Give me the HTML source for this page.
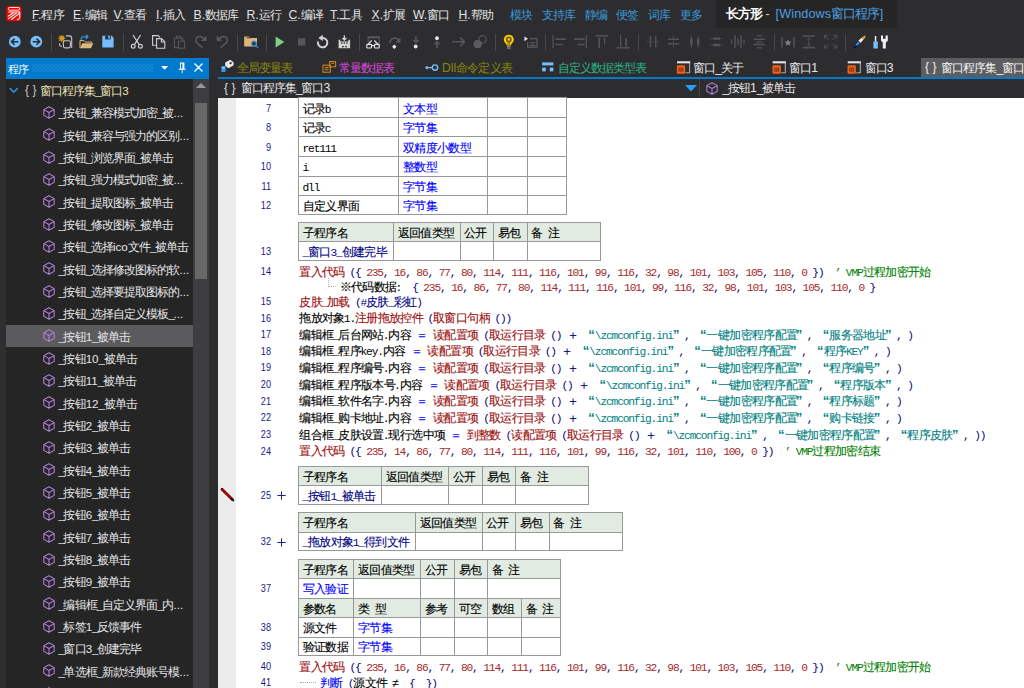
<!DOCTYPE html>
<html><head><meta charset="utf-8"><title>IDE</title>
<style>
html,body{margin:0;padding:0;background:#2d2d30;}
body{width:1024px;height:688px;overflow:hidden;position:relative;font-family:"Liberation Sans",sans-serif;}
#root{position:absolute;left:0;top:0;width:1024px;height:688px;overflow:hidden;background:#2d2d30;}
.abs{position:absolute;}
.t{position:absolute;white-space:nowrap;font-size:12.2px;line-height:16px;height:16px;color:#e4e4e4;}
.u{display:inline-block;white-space:nowrap;font-size:12px;letter-spacing:-0.9px;vertical-align:baseline;overflow:visible;}
.k{display:inline-block;white-space:nowrap;font-size:11.8px;letter-spacing:-0.64px;-webkit-text-stroke:0.12px;overflow:visible;vertical-align:baseline;font-family:"Liberation Sans",sans-serif;}
.us{letter-spacing:-1.4px;}
.qr{text-align:right;font-size:13px;letter-spacing:0;font-weight:bold;-webkit-text-stroke:0;}
.ql{text-align:left;font-size:13px;letter-spacing:0;font-weight:bold;-webkit-text-stroke:0;}
.a{display:inline-block;white-space:nowrap;font-family:"Liberation Mono",monospace;font-size:11.2px;letter-spacing:-1.141px;overflow:visible;vertical-align:baseline;}
.cl{position:absolute;left:299.2px;white-space:nowrap;height:16px;line-height:16px;font-size:11.16px;color:#000;}
.ln{position:absolute;left:240px;width:31px;text-align:right;font-size:10.4px;transform:scaleX(0.88);transform-origin:100% 50%;line-height:14px;height:14px;color:#1a1a8c;font-family:"Liberation Sans",sans-serif;}
.tb{position:absolute;border:1px solid #989898;box-sizing:border-box;background:#fff;}
.hd{position:absolute;background:#e1ebe1;}
.vl{position:absolute;width:1px;background:#989898;}
.hl{position:absolute;height:1px;background:#989898;}
.ct{position:absolute;white-space:nowrap;height:16px;line-height:16px;font-size:11.16px;color:#000;}
.sep{position:absolute;width:1px;background:#47474b;top:33.5px;height:17.5px;}
.tr{position:absolute;left:58.4px;white-space:nowrap;font-size:11.6px;line-height:16px;height:16px;color:#e6e6e6;}
svg{position:absolute;overflow:visible;}
</style></head><body><div id="root">
<div class="abs" style="left:0;top:0;width:1024px;height:57px;background:#2d2d30"></div><svg style="left:0;top:0" width="28" height="28" viewBox="0 0 28 28"><rect x="6.400" y="6" width="15" height="15.300" rx="2.400" fill="#f00505"/>
<rect x="8.300" y="7.500" width="11.300" height="2.700" rx="1.300" fill="none" stroke="#fff" stroke-width="0.900"/>
<path d="M8.300 12h11.400" stroke="#fff" stroke-width="1" fill="none"/>
<path d="M13.400 12.700L8.200 16.200M16.400 13L8.600 18.600M19 13.600L11.400 19.500M19.700 12v5.200q0 1.800-2.400 2.600" stroke="#fff" stroke-width="1.050" fill="none" stroke-linecap="round"/></svg><div class="t" style="left:32.0px;top:6.9px"><span style="text-decoration:underline;text-decoration-color:#9c9c9c;text-decoration-thickness:1px;text-underline-offset:0.6px">F</span>.<span class="u" style="width:22.20px">程序</span></div><div class="t" style="left:73.0px;top:6.9px"><span style="text-decoration:underline;text-decoration-color:#9c9c9c;text-decoration-thickness:1px;text-underline-offset:0.6px">E</span>.<span class="u" style="width:22.20px">编辑</span></div><div class="t" style="left:113.5px;top:6.9px"><span style="text-decoration:underline;text-decoration-color:#9c9c9c;text-decoration-thickness:1px;text-underline-offset:0.6px">V</span>.<span class="u" style="width:22.20px">查看</span></div><div class="t" style="left:156.0px;top:6.9px"><span style="text-decoration:underline;text-decoration-color:#9c9c9c;text-decoration-thickness:1px;text-underline-offset:0.6px">I</span>.<span class="u" style="width:22.20px">插入</span></div><div class="t" style="left:193.5px;top:6.9px"><span style="text-decoration:underline;text-decoration-color:#9c9c9c;text-decoration-thickness:1px;text-underline-offset:0.6px">B</span>.<span class="u" style="width:33.30px">数据库</span></div><div class="t" style="left:246.5px;top:6.9px"><span style="text-decoration:underline;text-decoration-color:#9c9c9c;text-decoration-thickness:1px;text-underline-offset:0.6px">R</span>.<span class="u" style="width:22.20px">运行</span></div><div class="t" style="left:288.5px;top:6.9px"><span style="text-decoration:underline;text-decoration-color:#9c9c9c;text-decoration-thickness:1px;text-underline-offset:0.6px">C</span>.<span class="u" style="width:22.20px">编译</span></div><div class="t" style="left:330.0px;top:6.9px"><span style="text-decoration:underline;text-decoration-color:#9c9c9c;text-decoration-thickness:1px;text-underline-offset:0.6px">T</span>.<span class="u" style="width:22.20px">工具</span></div><div class="t" style="left:371.5px;top:6.9px"><span style="text-decoration:underline;text-decoration-color:#9c9c9c;text-decoration-thickness:1px;text-underline-offset:0.6px">X</span>.<span class="u" style="width:22.20px">扩展</span></div><div class="t" style="left:413.0px;top:6.9px"><span style="text-decoration:underline;text-decoration-color:#9c9c9c;text-decoration-thickness:1px;text-underline-offset:0.6px">W</span>.<span class="u" style="width:22.20px">窗口</span></div><div class="t" style="left:458.5px;top:6.9px"><span style="text-decoration:underline;text-decoration-color:#9c9c9c;text-decoration-thickness:1px;text-underline-offset:0.6px">H</span>.<span class="u" style="width:22.20px">帮助</span></div><div class="t" style="left:510.0px;top:6.9px;color:#3c97d6"><span class="u" style="width:22.20px">模块</span></div><div class="t" style="left:542.0px;top:6.9px;color:#3c97d6"><span class="u" style="width:33.30px">支持库</span></div><div class="t" style="left:585.0px;top:6.9px;color:#3c97d6"><span class="u" style="width:22.20px">静编</span></div><div class="t" style="left:616.0px;top:6.9px;color:#3c97d6"><span class="u" style="width:22.20px">便签</span></div><div class="t" style="left:648.0px;top:6.9px;color:#3c97d6"><span class="u" style="width:22.20px">词库</span></div><div class="t" style="left:679.5px;top:6.9px;color:#3c97d6"><span class="u" style="width:22.20px">更多</span></div><div class="abs" style="left:716px;top:0;width:181px;height:27.5px;background:#252526"></div><div class="t" style="left:726px;top:6px;color:#ffffff;font-size:12px"><b><span class="u" style="width:35.10px;font-size:12.64px;letter-spacing:-0.94px">长方形</span></b></div><div class="t" style="left:765.5px;top:6px;color:#d8d8d8;font-size:12px">-</div><div class="t" style="left:775.5px;top:6px;color:#4f9fe0;font-size:12.6px;letter-spacing:0.15px">[Windows<span class="u" style="width:48.40px;font-size:13.07px;letter-spacing:-0.97px">窗口程序</span>]</div><svg style="left:0;top:28px" width="1024" height="29" viewBox="0 28 1024 29">
<g fill="none" stroke="#47474b" stroke-width="1">
<path d="M51.5 33.5v17.5M123.5 33.5v17.5M237.5 33.5v17.5M266.5 33.5v17.5M359.5 33.5v17.5M495.5 33.5v17.5M545.5 33.5v17.5M638.5 33.5v17.5M774.5 33.5v17.5M845.5 33.5v17.5"/>
</g>
<!-- back / forward -->
<circle cx="14.8" cy="41.7" r="5.9" fill="#75beff"/>
<path d="M18.4 41.7H11.6M14.6 38.6L11.4 41.7L14.6 44.8" stroke="#2d2d30" stroke-width="1.5" fill="none"/>
<circle cx="36.3" cy="41.7" r="5.9" fill="#75beff"/>
<path d="M32.7 41.7H39.5M36.5 38.6L39.7 41.7L36.5 44.8" stroke="#2d2d30" stroke-width="1.5" fill="none"/>
<!-- new -->
<g stroke="#d08e18" stroke-width="1.100" fill="none"><path d="M61.800 34.900v7M58.300 38.400h7M59.300 35.900l5 5M64.300 35.900l-5 5"/></g>
<circle cx="61.800" cy="38.400" r="2.300" fill="#d8961c"/>
<path d="M66 35.900h3.200q2.500 0 2.500 2.500v9.500" stroke="#c4c4c4" stroke-width="1.100" fill="none"/>
<rect x="63.400" y="40.700" width="7" height="7.200" rx="1.600" stroke="#c4c4c4" stroke-width="1.100" fill="none"/>
<path d="M59.600 43.200v1.600q0 1.500 1.500 1.500h1" stroke="#c4c4c4" stroke-width="1.100" fill="none"/>
<!-- open -->
<path d="M80 48.2v-7.6h4l1.2 1.4h6.3v1.3" stroke="#dcb67a" stroke-width="1" fill="none"/>
<path d="M82.3 43.2h11l-2.3 5h-11z" fill="#dcb67a"/>
<path d="M81.2 40v-1.2q0-2 2-2h4.4M85.8 34.6l2.2 2.2l-2.2 2.2" stroke="#3794e0" stroke-width="1.2" fill="none"/>
<!-- save -->
<path d="M102.3 35.8h9.3l2 2v9.7h-11.3z" fill="#75beff"/>
<rect x="105.2" y="35.8" width="5.6" height="3.6" fill="#2d2d30"/>
<rect x="108.2" y="35.8" width="1.6" height="2.8" fill="#75beff"/>
<!-- cut -->
<g stroke="#d0d0d0" stroke-width="1.2" fill="none">
<path d="M133 35l6.2 9.6M140.6 35l-6.2 9.6"/>
<circle cx="133.2" cy="46.2" r="1.9"/><circle cx="140.4" cy="46.2" r="1.9"/>
</g>
<!-- copy -->
<g stroke="#d0d0d0" stroke-width="1.1" fill="none">
<path d="M155.8 45.3h-3.2v-9.7h5.6l1.8 1.8"/>
<path d="M156.6 38.6h5l3.2 3.2v6.4h-8.2z"/><path d="M161.4 38.8v3.2h3.2"/>
</g>
<!-- paste dim -->
<g stroke="#57575a" stroke-width="1.1" fill="none">
<path d="M178 47.6h-3.6v-9.4h8.4v2.6"/><path d="M176.6 38v-1.8h4v1.8"/>
<rect x="178.4" y="41.2" width="6.2" height="7"/>
</g>
<!-- redo dim -->
<g stroke="#5a5a5d" stroke-width="1.500" fill="none" stroke-linecap="round">
<path d="M204.600 39.800Q202.600 36.300 199.400 36.400Q195.700 37 195.900 40.600Q196 42 197.400 43.300L202.200 47.400"/>
<path d="M218.600 39.800Q220.600 36.300 223.800 36.400Q227.500 37 227.300 40.600Q227.200 42 225.800 43.300L221 47.400"/>
</g>
<path d="M206.500 35.400v5.600h-5.600z" fill="#5a5a5d"/>
<path d="M216.700 35.400v5.600h5.600z" fill="#5a5a5d"/>
<!-- folder search -->
<path d="M244.200 36.500h4.600l1.200 1.400h7v8.600h-12.800z" fill="#dcb67a"/>
<path d="M246.400 37.800h4.400" stroke="#3a3222" stroke-width="0.900"/>
<circle cx="254" cy="43.600" r="2.200" fill="#26303c" stroke="#3580c8" stroke-width="1.300"/>
<path d="M255.700 45.300l2.400 2.400" stroke="#3580c8" stroke-width="1.500"/>
<!-- play -->
<path d="M275.600 36.600L284.300 42L275.600 47.500z" fill="#7fcf8a"/>
<!-- stop dim -->
<rect x="298" y="38.200" width="7.300" height="7.300" fill="#57575a"/>
<!-- restart -->
<path d="M322.650 37.950a4.700 4.700 0 1 1 -4.550 3.500" stroke="#d4d4d4" stroke-width="1.900" fill="none"/>
<path d="M318.300 37.900l4.600-3.100v6.200z" fill="#d4d4d4"/>
<!-- install -->
<path d="M338.600 39.800h1.700v1.800h8.100v-1.800h1.700v8.500h-11.500z" fill="#d4d4d4"/>
<path d="M344.350 35.400v3.400" stroke="#d4d4d4" stroke-width="1.500" fill="none"/>
<path d="M341.600 38.100h5.500l-2.750 3z" fill="#d4d4d4"/>
<g fill="#2d2d30"><rect x="341" y="42.500" width="1.500" height="1.200"/><rect x="343.600" y="42.500" width="1.500" height="1.200"/><rect x="346.200" y="42.500" width="1.500" height="1.200"/><rect x="342" y="46" width="1.700" height="1.300"/><rect x="345.200" y="46" width="1.700" height="1.300"/></g>
<!-- glasses -->
<path d="M368.200 42v-4.600h11v9.400" stroke="#5a5a5d" stroke-width="1.100" fill="none"/>
<path d="M367.600 37.300h12.200" stroke="#5a5a5d" stroke-width="1.900"/>
<g stroke="#e4e4e4" stroke-width="1.150" fill="none"><path d="M368 44.300l3.600-3.800M378 44.300l-3.600-3.800"/><rect x="366.800" y="44.400" width="4.700" height="3.600" rx="0.800"/><rect x="374.500" y="44.400" width="4.700" height="3.600" rx="0.800"/><path d="M371.500 45.600h3"/></g>
<!-- step over -->
<path d="M389.800 43.200q.8-5 5-5.200q2.600 0 4 2.200" stroke="#5a5a5d" stroke-width="1.600" fill="none"/>
<path d="M400.400 37.400v5.200h-5.200z" fill="#5a5a5d"/>
<path d="M394.300 44.500l2.200 2.200l-2.200 2.200l-2.200-2.200z" fill="#ececec"/>
<!-- step into -->
<path d="M415.900 36v6.400M413.300 39.800l2.600 2.800l2.600-2.800" stroke="#57575a" stroke-width="1.500" fill="none"/>
<circle cx="415.700" cy="46.500" r="1.900" fill="#e8e8e8"/>
<!-- step out -->
<circle cx="437" cy="38.200" r="1.900" fill="#e8e8e8"/>
<path d="M437 48.200v-6.400M434.400 44.400l2.600-2.800l2.600 2.800" stroke="#57575a" stroke-width="1.500" fill="none"/>
<!-- arrow right dim -->
<path d="M452.300 41.800h12M460 37.400l4.500 4.400l-4.500 4.400" stroke="#57575a" stroke-width="1.500" fill="none"/>
<!-- breakpoints dim -->
<circle cx="482.600" cy="39.400" r="3.700" fill="none" stroke="#57575a" stroke-width="1.200"/>
<circle cx="477.700" cy="44.200" r="4.100" fill="#5c5c5f"/>
<!-- bulb -->
<path d="M508.800 34.700a4.900 4.900 0 0 1 3 8.800q-.9.800-.9 2h-4.200q0-1.200-.9-2a4.900 4.900 0 0 1 3-8.800z" fill="#ffcc00"/>
<circle cx="508.800" cy="39.500" r="2.900" fill="#6e5a00"/>
<rect x="507.700" y="38.400" width="2.200" height="2.200" fill="#ffd633"/>
<path d="M508 42v3.400M509.600 42v3.400" stroke="#6e5a00" stroke-width="0.700"/>
<path d="M507 46.700h3.600M507 48.100h3.600" stroke="#a8a8a8" stroke-width="0.900"/>
<!-- run-to -->
<path d="M524.400 36.400l3.600 2.400l-3.600 2.400z" fill="#e0e0e0"/>
<path d="M530 38.600h7v8.600h-9.400v-4.600" stroke="#5c5c60" stroke-width="1.200" fill="none"/>
<path d="M529.600 42.600h6M532.400 42.600v3M529.600 45.400h6" stroke="#5c5c60" stroke-width="0.900" fill="none"/>
<!-- align icons dim -->
<g stroke="#535357" fill="none">
<path d="M553 35v13.300" stroke-width="1.300"/><path d="M555.400 39.200h10.400M555.400 44.500h7.600" stroke-width="1.700"/>
<path d="M586.300 35v13.300" stroke-width="1.300"/><path d="M574 39.200h10.600M577.400 44.500h7.200" stroke-width="1.700"/>
<path d="M595.500 35.800h12.800" stroke-width="1.500"/><path d="M599.200 37.600v10.600" stroke-width="1.800"/><path d="M604.600 37.600v6.800" stroke-width="1.300"/>
<path d="M616.600 47.800h13.200" stroke-width="1.500"/><path d="M620.600 35.200v11.400" stroke-width="1.300"/><path d="M626.100 38v8.600" stroke-width="1.700"/>
<!-- spacing -->
<path d="M650.400 36.200v11M655.700 36.200v11" stroke-width="1.600"/><path d="M647 41.800h2M657 41.800h2M652 41.800h2" stroke-width="1"/>
<path d="M667.800 39.200h11.200M667.800 43.800h11.200" stroke-width="1.600"/><path d="M673.400 35.600v2.400M673.400 40.600v2M673.400 45.200v2.400" stroke-width="1"/>
<path d="M691.400 38.200v7.200M698.200 38.200v7.200" stroke-width="2.600"/><path d="M691.400 35v13.400M698.200 35v13.400" stroke-width="0.700"/>
<path d="M713.400 38.600h6.600M713.400 45h6.600" stroke-width="2.400"/><path d="M709.800 38.600h13.200M709.800 45h13.200" stroke-width="0.700"/>
<path d="M735 35.200v13M741 35.200v13" stroke-width="1.500"/><path d="M738 38.400v6.800" stroke-width="1.500"/><path d="M731.600 39.400v4.800M744 39.400v4.800" stroke-width="1.300"/>
<path d="M753.600 39.200h11.400M753.600 44.600h11.400" stroke-width="1.500"/><path d="M756.600 35.800h5.400M756.600 47.800h5.400M756.600 41.900h5.400" stroke-width="1.300"/>
<!-- |*| -->
<path d="M782 37v10.400M794 37v10.400" stroke-width="1.500"/>
<!-- I height -->
<path d="M802.600 36h12.400M802.600 47.600h12.400" stroke-width="1.700"/><path d="M808.800 38v7.600M807.200 39.600l1.600-1.600l1.600 1.600M807.200 44l1.600 1.600l1.600-1.600" stroke-width="0.900"/>
<!-- expand -->
<path d="M824.400 38.800v-3.400h3.400M824.600 35.600l4 4M833.400 35.400h3.400v3.400M836.600 35.600l-4 4M824.400 44.600v3.400h3.400M824.600 47.800l4-4M833.400 48h3.400v-3.400M836.600 47.800l-4-4" stroke-width="1"/>
</g>
<path d="M788 39.300l1 2.200l2.400.3l-1.800 1.600l.5 2.400l-2.100-1.200l-2.100 1.200l.5-2.400l-1.800-1.600l2.400-.3z" fill="#808083"/>
<!-- brush -->
<path d="M853.400 49q.6-4.400 4-7.600l2.800 2.200q-3 3.600-6.800 5.400z" fill="#101014"/>
<path d="M855 46.200q1-2.800 3-4.800l2 1.800q-2 2.400-5 3z" fill="#1e90ff"/>
<path d="M858.400 40.800l3.200-3l2 1.800l-3 3.200z" fill="#f4f4f4"/>
<path d="M861.800 37.600q1.800-1.800 3.600-2.200q.8.800-1.600 4z" fill="#f0a030"/>
<!-- tools -->
<rect x="874.800" y="36" width="1.500" height="5.400" fill="#f0f0f0"/>
<rect x="873.400" y="41.200" width="4.400" height="7.400" rx="0.600" fill="#75beff"/>
<path d="M881 35.600h2v3.200h2.600v-3.200h2.200v5.200l-2 1.800v6h-3v-6l-1.800-1.800z" fill="#f0f0f0"/>
</svg>
<div class="abs" style="left:0;top:57.5px;width:5.5px;height:631px;background:#2f2f32"></div><div class="abs" style="left:5.5px;top:57.5px;width:203.7px;height:21.3px;background:#007acc"></div><div class="t" style="left:7.8px;top:60.8px;color:#fff;font-size:11.4px"><span class="u" style="width:21.20px;font-size:11.45px;letter-spacing:-0.85px">程序</span></div><div class="abs" style="left:32px;top:64px;width:121px;height:8px;opacity:.2;background-image:radial-gradient(circle,#d8ecff 0.6px,transparent 0.9px),radial-gradient(circle,#d8ecff 0.6px,transparent 0.9px);background-size:4px 4px;background-position:0 0,2px 2px"></div><svg style="left:160px;top:60px" width="48" height="16" viewBox="160 60 48 16">
<path d="M161 66h7.2l-3.6 3.8z" fill="#fff"/>
<path d="M180 62.5h4.4v6.3h1.2v1h-3v3.4h-0.9v-3.4h-3v-1h1.3z M181 63.5v5.3h1.4v-5.3z" fill="#fff" fill-rule="evenodd"/>
<path d="M194.5 63.5l8 8M202.5 63.5l-8 8" stroke="#fff" stroke-width="1.3" fill="none"/></svg><div class="abs" style="left:5.5px;top:78.8px;width:187px;height:610px;background:#252526"></div><div class="abs" style="left:192.8px;top:78.8px;width:17.2px;height:610px;background:#3e3e42"></div><div class="abs" style="left:195px;top:102.7px;width:12.3px;height:176.6px;background:#686868"></div><svg style="left:196px;top:82.5px" width="10" height="5" viewBox="0 0 10 5"><path d="M0 5L5 0L10 5z" fill="#999"/></svg><div class="abs" style="left:209.2px;top:57.5px;width:8.8px;height:631px;background:#2d2d30"></div><svg style="left:9px;top:87.0px" width="10" height="7" viewBox="0 0 10 7"><path d="M0.8 1L4.8 5.2L8.8 1" fill="none" stroke="#2b9af0" stroke-width="1.4"/></svg><div class="tr" style="left:25px;top:81.8px;color:#c6c6c6;font-size:12px;letter-spacing:0.1px">{&nbsp;}</div><div class="tr" style="left:39.6px;top:82.7px;color:#e8e2b8"><span class="u" style="width:55.50px">窗口程序集</span><span class="us">_</span><span class="u" style="width:22.20px">窗口</span>3</div><svg style="left:42.5px;top:106.0px" width="12" height="13" viewBox="0 0 12 13"><path d="M6 0.7L11.2 3.6V9.4L6 12.3L0.8 9.4V3.6z M0.8 3.6L6 6.5L11.2 3.6 M6 6.5V12.3" fill="none" stroke="#b180d7" stroke-width="1.05" stroke-linejoin="round"/></svg><div class="tr" style="top:105.4px"><span class="us">_</span><span class="u" style="width:22.20px">按钮</span><span class="us">_</span><span class="u" style="width:66.60px">兼容模式加密</span><span class="us">_</span><span class="u" style="width:11.10px">被</span>...</div><svg style="left:42.5px;top:128.4px" width="12" height="13" viewBox="0 0 12 13"><path d="M6 0.7L11.2 3.6V9.4L6 12.3L0.8 9.4V3.6z M0.8 3.6L6 6.5L11.2 3.6 M6 6.5V12.3" fill="none" stroke="#b180d7" stroke-width="1.05" stroke-linejoin="round"/></svg><div class="tr" style="top:127.8px"><span class="us">_</span><span class="u" style="width:22.20px">按钮</span><span class="us">_</span><span class="u" style="width:88.80px">兼容与强力的区别</span>...</div><svg style="left:42.5px;top:150.7px" width="12" height="13" viewBox="0 0 12 13"><path d="M6 0.7L11.2 3.6V9.4L6 12.3L0.8 9.4V3.6z M0.8 3.6L6 6.5L11.2 3.6 M6 6.5V12.3" fill="none" stroke="#b180d7" stroke-width="1.05" stroke-linejoin="round"/></svg><div class="tr" style="top:150.1px"><span class="us">_</span><span class="u" style="width:22.20px">按钮</span><span class="us">_</span><span class="u" style="width:44.40px">浏览界面</span><span class="us">_</span><span class="u" style="width:33.30px">被单击</span></div><svg style="left:42.5px;top:173.0px" width="12" height="13" viewBox="0 0 12 13"><path d="M6 0.7L11.2 3.6V9.4L6 12.3L0.8 9.4V3.6z M0.8 3.6L6 6.5L11.2 3.6 M6 6.5V12.3" fill="none" stroke="#b180d7" stroke-width="1.05" stroke-linejoin="round"/></svg><div class="tr" style="top:172.4px"><span class="us">_</span><span class="u" style="width:22.20px">按钮</span><span class="us">_</span><span class="u" style="width:66.60px">强力模式加密</span><span class="us">_</span><span class="u" style="width:11.10px">被</span>...</div><svg style="left:42.5px;top:195.3px" width="12" height="13" viewBox="0 0 12 13"><path d="M6 0.7L11.2 3.6V9.4L6 12.3L0.8 9.4V3.6z M0.8 3.6L6 6.5L11.2 3.6 M6 6.5V12.3" fill="none" stroke="#b180d7" stroke-width="1.05" stroke-linejoin="round"/></svg><div class="tr" style="top:194.7px"><span class="us">_</span><span class="u" style="width:22.20px">按钮</span><span class="us">_</span><span class="u" style="width:44.40px">提取图标</span><span class="us">_</span><span class="u" style="width:33.30px">被单击</span></div><svg style="left:42.5px;top:217.7px" width="12" height="13" viewBox="0 0 12 13"><path d="M6 0.7L11.2 3.6V9.4L6 12.3L0.8 9.4V3.6z M0.8 3.6L6 6.5L11.2 3.6 M6 6.5V12.3" fill="none" stroke="#b180d7" stroke-width="1.05" stroke-linejoin="round"/></svg><div class="tr" style="top:217.1px"><span class="us">_</span><span class="u" style="width:22.20px">按钮</span><span class="us">_</span><span class="u" style="width:44.40px">修改图标</span><span class="us">_</span><span class="u" style="width:33.30px">被单击</span></div><svg style="left:42.5px;top:240.0px" width="12" height="13" viewBox="0 0 12 13"><path d="M6 0.7L11.2 3.6V9.4L6 12.3L0.8 9.4V3.6z M0.8 3.6L6 6.5L11.2 3.6 M6 6.5V12.3" fill="none" stroke="#b180d7" stroke-width="1.05" stroke-linejoin="round"/></svg><div class="tr" style="top:239.4px"><span class="us">_</span><span class="u" style="width:22.20px">按钮</span><span class="us">_</span><span class="u" style="width:22.20px">选择</span>ico<span class="u" style="width:22.20px">文件</span><span class="us">_</span><span class="u" style="width:33.30px">被单击</span></div><svg style="left:42.5px;top:262.3px" width="12" height="13" viewBox="0 0 12 13"><path d="M6 0.7L11.2 3.6V9.4L6 12.3L0.8 9.4V3.6z M0.8 3.6L6 6.5L11.2 3.6 M6 6.5V12.3" fill="none" stroke="#b180d7" stroke-width="1.05" stroke-linejoin="round"/></svg><div class="tr" style="top:261.7px"><span class="us">_</span><span class="u" style="width:22.20px">按钮</span><span class="us">_</span><span class="u" style="width:88.80px">选择修改图标的软</span>...</div><svg style="left:42.5px;top:284.7px" width="12" height="13" viewBox="0 0 12 13"><path d="M6 0.7L11.2 3.6V9.4L6 12.3L0.8 9.4V3.6z M0.8 3.6L6 6.5L11.2 3.6 M6 6.5V12.3" fill="none" stroke="#b180d7" stroke-width="1.05" stroke-linejoin="round"/></svg><div class="tr" style="top:284.1px"><span class="us">_</span><span class="u" style="width:22.20px">按钮</span><span class="us">_</span><span class="u" style="width:88.80px">选择要提取图标的</span>...</div><svg style="left:42.5px;top:307.0px" width="12" height="13" viewBox="0 0 12 13"><path d="M6 0.7L11.2 3.6V9.4L6 12.3L0.8 9.4V3.6z M0.8 3.6L6 6.5L11.2 3.6 M6 6.5V12.3" fill="none" stroke="#b180d7" stroke-width="1.05" stroke-linejoin="round"/></svg><div class="tr" style="top:306.4px"><span class="us">_</span><span class="u" style="width:22.20px">按钮</span><span class="us">_</span><span class="u" style="width:77.70px">选择自定义模板</span><span class="us">_</span>...</div><div class="abs" style="left:5.5px;top:324.7px;width:187.3px;height:22.2px;background:#5b5b5e"></div><svg style="left:42.5px;top:329.3px" width="12" height="13" viewBox="0 0 12 13"><path d="M6 0.7L11.2 3.6V9.4L6 12.3L0.8 9.4V3.6z M0.8 3.6L6 6.5L11.2 3.6 M6 6.5V12.3" fill="none" stroke="#b180d7" stroke-width="1.05" stroke-linejoin="round"/></svg><div class="tr" style="top:328.7px"><span class="us">_</span><span class="u" style="width:22.20px">按钮</span>1<span class="us">_</span><span class="u" style="width:33.30px">被单击</span></div><svg style="left:42.5px;top:351.7px" width="12" height="13" viewBox="0 0 12 13"><path d="M6 0.7L11.2 3.6V9.4L6 12.3L0.8 9.4V3.6z M0.8 3.6L6 6.5L11.2 3.6 M6 6.5V12.3" fill="none" stroke="#b180d7" stroke-width="1.05" stroke-linejoin="round"/></svg><div class="tr" style="top:351.1px"><span class="us">_</span><span class="u" style="width:22.20px">按钮</span>10<span class="us">_</span><span class="u" style="width:33.30px">被单击</span></div><svg style="left:42.5px;top:374.0px" width="12" height="13" viewBox="0 0 12 13"><path d="M6 0.7L11.2 3.6V9.4L6 12.3L0.8 9.4V3.6z M0.8 3.6L6 6.5L11.2 3.6 M6 6.5V12.3" fill="none" stroke="#b180d7" stroke-width="1.05" stroke-linejoin="round"/></svg><div class="tr" style="top:373.4px"><span class="us">_</span><span class="u" style="width:22.20px">按钮</span>11<span class="us">_</span><span class="u" style="width:33.30px">被单击</span></div><svg style="left:42.5px;top:396.3px" width="12" height="13" viewBox="0 0 12 13"><path d="M6 0.7L11.2 3.6V9.4L6 12.3L0.8 9.4V3.6z M0.8 3.6L6 6.5L11.2 3.6 M6 6.5V12.3" fill="none" stroke="#b180d7" stroke-width="1.05" stroke-linejoin="round"/></svg><div class="tr" style="top:395.7px"><span class="us">_</span><span class="u" style="width:22.20px">按钮</span>12<span class="us">_</span><span class="u" style="width:33.30px">被单击</span></div><svg style="left:42.5px;top:418.6px" width="12" height="13" viewBox="0 0 12 13"><path d="M6 0.7L11.2 3.6V9.4L6 12.3L0.8 9.4V3.6z M0.8 3.6L6 6.5L11.2 3.6 M6 6.5V12.3" fill="none" stroke="#b180d7" stroke-width="1.05" stroke-linejoin="round"/></svg><div class="tr" style="top:418.1px"><span class="us">_</span><span class="u" style="width:22.20px">按钮</span>2<span class="us">_</span><span class="u" style="width:33.30px">被单击</span></div><svg style="left:42.5px;top:441.0px" width="12" height="13" viewBox="0 0 12 13"><path d="M6 0.7L11.2 3.6V9.4L6 12.3L0.8 9.4V3.6z M0.8 3.6L6 6.5L11.2 3.6 M6 6.5V12.3" fill="none" stroke="#b180d7" stroke-width="1.05" stroke-linejoin="round"/></svg><div class="tr" style="top:440.4px"><span class="us">_</span><span class="u" style="width:22.20px">按钮</span>3<span class="us">_</span><span class="u" style="width:33.30px">被单击</span></div><svg style="left:42.5px;top:463.3px" width="12" height="13" viewBox="0 0 12 13"><path d="M6 0.7L11.2 3.6V9.4L6 12.3L0.8 9.4V3.6z M0.8 3.6L6 6.5L11.2 3.6 M6 6.5V12.3" fill="none" stroke="#b180d7" stroke-width="1.05" stroke-linejoin="round"/></svg><div class="tr" style="top:462.7px"><span class="us">_</span><span class="u" style="width:22.20px">按钮</span>4<span class="us">_</span><span class="u" style="width:33.30px">被单击</span></div><svg style="left:42.5px;top:485.6px" width="12" height="13" viewBox="0 0 12 13"><path d="M6 0.7L11.2 3.6V9.4L6 12.3L0.8 9.4V3.6z M0.8 3.6L6 6.5L11.2 3.6 M6 6.5V12.3" fill="none" stroke="#b180d7" stroke-width="1.05" stroke-linejoin="round"/></svg><div class="tr" style="top:485.0px"><span class="us">_</span><span class="u" style="width:22.20px">按钮</span>5<span class="us">_</span><span class="u" style="width:33.30px">被单击</span></div><svg style="left:42.5px;top:508.0px" width="12" height="13" viewBox="0 0 12 13"><path d="M6 0.7L11.2 3.6V9.4L6 12.3L0.8 9.4V3.6z M0.8 3.6L6 6.5L11.2 3.6 M6 6.5V12.3" fill="none" stroke="#b180d7" stroke-width="1.05" stroke-linejoin="round"/></svg><div class="tr" style="top:507.4px"><span class="us">_</span><span class="u" style="width:22.20px">按钮</span>6<span class="us">_</span><span class="u" style="width:33.30px">被单击</span></div><svg style="left:42.5px;top:530.3px" width="12" height="13" viewBox="0 0 12 13"><path d="M6 0.7L11.2 3.6V9.4L6 12.3L0.8 9.4V3.6z M0.8 3.6L6 6.5L11.2 3.6 M6 6.5V12.3" fill="none" stroke="#b180d7" stroke-width="1.05" stroke-linejoin="round"/></svg><div class="tr" style="top:529.7px"><span class="us">_</span><span class="u" style="width:22.20px">按钮</span>7<span class="us">_</span><span class="u" style="width:33.30px">被单击</span></div><svg style="left:42.5px;top:552.6px" width="12" height="13" viewBox="0 0 12 13"><path d="M6 0.7L11.2 3.6V9.4L6 12.3L0.8 9.4V3.6z M0.8 3.6L6 6.5L11.2 3.6 M6 6.5V12.3" fill="none" stroke="#b180d7" stroke-width="1.05" stroke-linejoin="round"/></svg><div class="tr" style="top:552.0px"><span class="us">_</span><span class="u" style="width:22.20px">按钮</span>8<span class="us">_</span><span class="u" style="width:33.30px">被单击</span></div><svg style="left:42.5px;top:575.0px" width="12" height="13" viewBox="0 0 12 13"><path d="M6 0.7L11.2 3.6V9.4L6 12.3L0.8 9.4V3.6z M0.8 3.6L6 6.5L11.2 3.6 M6 6.5V12.3" fill="none" stroke="#b180d7" stroke-width="1.05" stroke-linejoin="round"/></svg><div class="tr" style="top:574.4px"><span class="us">_</span><span class="u" style="width:22.20px">按钮</span>9<span class="us">_</span><span class="u" style="width:33.30px">被单击</span></div><svg style="left:42.5px;top:597.3px" width="12" height="13" viewBox="0 0 12 13"><path d="M6 0.7L11.2 3.6V9.4L6 12.3L0.8 9.4V3.6z M0.8 3.6L6 6.5L11.2 3.6 M6 6.5V12.3" fill="none" stroke="#b180d7" stroke-width="1.05" stroke-linejoin="round"/></svg><div class="tr" style="top:596.7px"><span class="us">_</span><span class="u" style="width:33.30px">编辑框</span><span class="us">_</span><span class="u" style="width:55.50px">自定义界面</span><span class="us">_</span><span class="u" style="width:11.10px">内</span>...</div><svg style="left:42.5px;top:619.6px" width="12" height="13" viewBox="0 0 12 13"><path d="M6 0.7L11.2 3.6V9.4L6 12.3L0.8 9.4V3.6z M0.8 3.6L6 6.5L11.2 3.6 M6 6.5V12.3" fill="none" stroke="#b180d7" stroke-width="1.05" stroke-linejoin="round"/></svg><div class="tr" style="top:619.0px"><span class="us">_</span><span class="u" style="width:22.20px">标签</span>1<span class="us">_</span><span class="u" style="width:44.40px">反馈事件</span></div><svg style="left:42.5px;top:642.0px" width="12" height="13" viewBox="0 0 12 13"><path d="M6 0.7L11.2 3.6V9.4L6 12.3L0.8 9.4V3.6z M0.8 3.6L6 6.5L11.2 3.6 M6 6.5V12.3" fill="none" stroke="#b180d7" stroke-width="1.05" stroke-linejoin="round"/></svg><div class="tr" style="top:641.4px"><span class="us">_</span><span class="u" style="width:22.20px">窗口</span>3<span class="us">_</span><span class="u" style="width:44.40px">创建完毕</span></div><svg style="left:42.5px;top:664.3px" width="12" height="13" viewBox="0 0 12 13"><path d="M6 0.7L11.2 3.6V9.4L6 12.3L0.8 9.4V3.6z M0.8 3.6L6 6.5L11.2 3.6 M6 6.5V12.3" fill="none" stroke="#b180d7" stroke-width="1.05" stroke-linejoin="round"/></svg><div class="tr" style="top:663.7px"><span class="us">_</span><span class="u" style="width:33.30px">单选框</span><span class="us">_</span><span class="u" style="width:77.70px">新款经典账号模</span>...</div><svg style="left:42.5px;top:686.6px" width="12" height="13" viewBox="0 0 12 13"><path d="M6 0.7L11.2 3.6V9.4L6 12.3L0.8 9.4V3.6z M0.8 3.6L6 6.5L11.2 3.6 M6 6.5V12.3" fill="none" stroke="#b180d7" stroke-width="1.05" stroke-linejoin="round"/></svg><div class="tr" style="top:686.0px"><span class="us">_</span><span class="u" style="width:33.30px">单选框</span><span class="us">_</span><span class="u" style="width:77.70px">新款经典账号模</span>...</div><div class="abs" style="left:920.5px;top:57.5px;width:104px;height:19.5px;background:#5d5d60"></div><div class="t" style="left:237.0px;top:59.5px;color:#87870d"><span class="u" style="width:55.50px">全局变量表</span></div><div class="t" style="left:339.0px;top:59.5px;color:#d548d5"><span class="u" style="width:55.50px">常量数据表</span></div><div class="t" style="left:442.0px;top:59.5px;color:#87870d">Dll<span class="u" style="width:55.50px">命令定义表</span></div><div class="t" style="left:557.6px;top:59.5px;color:#2bb385"><span class="u" style="width:88.80px">自定义数据类型表</span></div><div class="t" style="left:693.0px;top:59.5px;color:#e8e8e8"><span class="u" style="width:22.20px">窗口</span><span class="us">_</span><span class="u" style="width:22.20px">关于</span></div><div class="t" style="left:789.0px;top:59.5px;color:#e8e8e8"><span class="u" style="width:22.20px">窗口</span>1</div><div class="t" style="left:864.5px;top:59.5px;color:#e8e8e8"><span class="u" style="width:22.20px">窗口</span>3</div><div class="t" style="left:925px;top:59px;color:#f0f0f0;font-size:12px;letter-spacing:0.1px">{&nbsp;}</div><div class="t" style="left:941.0px;top:59.5px;color:#f4f4f4"><span class="u" style="width:55.50px">窗口程序集</span><span class="us">_</span><span class="u" style="width:22.20px">窗口</span></div><svg style="left:218px;top:57px" width="806" height="22" viewBox="218 57 806 22">
<!-- global var icon -->
<path d="M225.200 62.600l5-2.800l3.400 2.400v3l-5 3l-3.400-2.400z" fill="#e8e8e8"/>
<circle cx="230.600" cy="63.200" r="1.100" fill="#2d2d30"/>
<rect x="221.400" y="66" width="4.200" height="6" fill="#2b9af0"/>
<rect x="222.200" y="67.200" width="2.600" height="1.200" fill="#bfe0ff"/>
<!-- const icon -->
<g stroke="#c8841e" stroke-width="1.100" fill="none">
<rect x="323" y="65.200" width="7.400" height="7"/><path d="M324.800 67.600h3.800M324.800 69.800h3.800"/>
<rect x="329.600" y="61.600" width="6" height="5.200"/><path d="M331.400 63.400h2.400"/>
</g>
<!-- dll icon -->
<circle cx="435" cy="67.600" r="2.700" fill="none" stroke="#75beff" stroke-width="1.400"/>
<path d="M425.200 67.600h7M427 66v3.200" stroke="#75beff" stroke-width="1.400" fill="none"/>
<!-- datatype icon -->
<rect x="542.200" y="62.400" width="11.200" height="3" fill="#75beff"/>
<rect x="542.200" y="67.600" width="3.600" height="3.800" fill="#75beff"/><rect x="549.800" y="67.600" width="3.600" height="3.800" fill="#75beff"/>
<!-- window icons -->
<g>
<path d="M689.600 63v9.700h-4" stroke="#a8a8a8" stroke-width="1.100" fill="none"/><path d="M677 62.300h13.200" stroke="#e4e4e4" stroke-width="2.100"/>
<rect x="676.800" y="65.300" width="8.400" height="8.500" rx="1.300" fill="#e8601c"/>
<path d="M678.600 68.200h4.800M678.600 71h4.800M681 68.200v2.800M679.200 68.200v2.800M682.800 68.200v2.800" stroke="#7a2a00" stroke-width="0.800" fill="none"/>
</g><g transform="translate(95.7,0)">
<path d="M689.600 63v9.700h-4" stroke="#a8a8a8" stroke-width="1.100" fill="none"/><path d="M677 62.300h13.200" stroke="#e4e4e4" stroke-width="2.100"/>
<rect x="676.800" y="65.300" width="8.400" height="8.500" rx="1.300" fill="#e8601c"/>
<path d="M678.600 68.200h4.800M678.600 71h4.800M681 68.200v2.800M679.200 68.200v2.800M682.800 68.200v2.800" stroke="#7a2a00" stroke-width="0.800" fill="none"/>
</g><g transform="translate(170.7,0)">
<path d="M689.600 63v9.700h-4" stroke="#a8a8a8" stroke-width="1.100" fill="none"/><path d="M677 62.300h13.200" stroke="#e4e4e4" stroke-width="2.100"/>
<rect x="676.800" y="65.300" width="8.400" height="8.500" rx="1.300" fill="#e8601c"/>
<path d="M678.600 68.200h4.800M678.600 71h4.800M681 68.200v2.800M679.200 68.200v2.800M682.800 68.200v2.800" stroke="#7a2a00" stroke-width="0.800" fill="none"/>
</g>

</svg>
<div class="abs" style="left:218px;top:76.5px;width:806px;height:2.9px;background:#007acc"></div><div class="abs" style="left:218px;top:97.5px;width:806px;height:591px;background:#ffffff"></div><div class="abs" style="left:218px;top:97.5px;width:18px;height:591px;background:#ececec"></div><svg style="left:219px;top:487px" width="16" height="15" viewBox="219 487 16 15"><path d="M222 489.200L232.600 499.800" stroke="#3a0000" stroke-width="2.700" stroke-linecap="round"/><path d="M222.400 489.400L230.600 497.600" stroke="#d40000" stroke-width="1.500" stroke-linecap="round"/><path d="M231.400 498.800L233.600 500.800" stroke="#1a1a1a" stroke-width="1.300" stroke-linecap="round"/></svg><div class="abs" style="left:298.00px;top:97.50px;width:268.30px;height:116.90px;background:#fff"></div><div class="hl" style="left:297.50px;top:97.00px;width:269.30px"></div><div class="hl" style="left:297.50px;top:116.80px;width:269.30px"></div><div class="hl" style="left:297.50px;top:136.30px;width:269.30px"></div><div class="hl" style="left:297.50px;top:156.00px;width:269.30px"></div><div class="hl" style="left:297.50px;top:175.70px;width:269.30px"></div><div class="hl" style="left:297.50px;top:195.10px;width:269.30px"></div><div class="hl" style="left:297.50px;top:213.90px;width:269.30px"></div><div class="vl" style="left:297.50px;top:97.00px;height:117.90px"></div><div class="vl" style="left:565.80px;top:97.00px;height:117.90px"></div><div class="vl" style="left:398.00px;top:97.00px;height:20.80px"></div><div class="vl" style="left:487.30px;top:97.00px;height:20.80px"></div><div class="vl" style="left:526.50px;top:97.00px;height:20.80px"></div><div class="vl" style="left:398.00px;top:116.80px;height:20.50px"></div><div class="vl" style="left:487.30px;top:116.80px;height:20.50px"></div><div class="vl" style="left:526.50px;top:116.80px;height:20.50px"></div><div class="vl" style="left:398.00px;top:136.30px;height:20.70px"></div><div class="vl" style="left:487.30px;top:136.30px;height:20.70px"></div><div class="vl" style="left:526.50px;top:136.30px;height:20.70px"></div><div class="vl" style="left:398.00px;top:156.00px;height:20.70px"></div><div class="vl" style="left:487.30px;top:156.00px;height:20.70px"></div><div class="vl" style="left:526.50px;top:156.00px;height:20.70px"></div><div class="vl" style="left:398.00px;top:175.70px;height:20.40px"></div><div class="vl" style="left:487.30px;top:175.70px;height:20.40px"></div><div class="vl" style="left:526.50px;top:175.70px;height:20.40px"></div><div class="vl" style="left:398.00px;top:195.10px;height:19.80px"></div><div class="vl" style="left:487.30px;top:195.10px;height:19.80px"></div><div class="vl" style="left:526.50px;top:195.10px;height:19.80px"></div><div class="ln" style="top:101.5px">7</div><div class="ct" style="left:302.50px;top:100.50px;color:#000000"><span class="k" style="width:22.32px">记录</span><span class="a" style="width:5.58px">b</span></div><div class="ct" style="left:403.00px;top:100.50px;color:#0000ff"><span class="k" style="width:33.48px">文本型</span></div><div class="ln" style="top:121.2px">8</div><div class="ct" style="left:302.50px;top:120.15px;color:#000000"><span class="k" style="width:22.32px">记录</span><span class="a" style="width:5.58px">c</span></div><div class="ct" style="left:403.00px;top:120.15px;color:#0000ff"><span class="k" style="width:33.48px">字节集</span></div><div class="ln" style="top:140.8px">9</div><div class="ct" style="left:302.50px;top:139.75px;color:#000000"><span class="a" style="width:33.48px">ret111</span></div><div class="ct" style="left:403.00px;top:139.75px;color:#0000ff"><span class="k" style="width:66.96px">双精度小数型</span></div><div class="ln" style="top:160.4px">10</div><div class="ct" style="left:302.50px;top:159.45px;color:#000000"><span class="a" style="width:5.58px">i</span></div><div class="ct" style="left:403.00px;top:159.45px;color:#0000ff"><span class="k" style="width:33.48px">整数型</span></div><div class="ln" style="top:180.0px">11</div><div class="ct" style="left:302.50px;top:179.00px;color:#000000"><span class="a" style="width:16.74px">dll</span></div><div class="ct" style="left:403.00px;top:179.00px;color:#0000ff"><span class="k" style="width:33.48px">字节集</span></div><div class="ln" style="top:199.1px">12</div><div class="ct" style="left:302.50px;top:198.10px;color:#000000"><span class="k" style="width:55.80px">自定义界面</span></div><div class="ct" style="left:403.00px;top:198.10px;color:#0000ff"><span class="k" style="width:33.48px">字节集</span></div><div class="abs" style="left:298.00px;top:222.50px;width:302.00px;height:38.30px;background:#fff"></div><div class="hd" style="left:298.00px;top:222.50px;width:302.00px;height:19.30px"></div><div class="hl" style="left:297.50px;top:222.00px;width:303.00px"></div><div class="hl" style="left:297.50px;top:241.30px;width:303.00px"></div><div class="hl" style="left:297.50px;top:260.30px;width:303.00px"></div><div class="vl" style="left:297.50px;top:222.00px;height:39.30px"></div><div class="vl" style="left:599.50px;top:222.00px;height:39.30px"></div><div class="vl" style="left:392.80px;top:222.00px;height:20.30px"></div><div class="vl" style="left:459.50px;top:222.00px;height:20.30px"></div><div class="vl" style="left:493.00px;top:222.00px;height:20.30px"></div><div class="vl" style="left:526.50px;top:222.00px;height:20.30px"></div><div class="vl" style="left:392.80px;top:241.30px;height:20.00px"></div><div class="vl" style="left:459.50px;top:241.30px;height:20.00px"></div><div class="vl" style="left:493.00px;top:241.30px;height:20.00px"></div><div class="vl" style="left:526.50px;top:241.30px;height:20.00px"></div><div class="ct" style="left:302.50px;top:225.15px;color:#000000"><span class="k" style="width:44.64px">子程序名</span></div><div class="ct" style="left:397.50px;top:225.15px;color:#000000"><span class="k" style="width:55.80px">返回值类型</span></div><div class="ct" style="left:464.00px;top:225.15px;color:#000000"><span class="k" style="width:22.32px">公开</span></div><div class="ct" style="left:497.50px;top:225.15px;color:#000000"><span class="k" style="width:22.32px">易包</span></div><div class="ct" style="left:531.00px;top:225.15px;color:#000000"><span class="k" style="width:11.16px">备</span><span class="a" style="width:5.58px">&nbsp;</span><span class="k" style="width:11.16px">注</span></div><div class="ln" style="top:245.3px">13</div><div class="ct" style="left:302.50px;top:244.30px;color:#000080"><span class="a" style="width:5.58px">_</span><span class="k" style="width:22.32px">窗口</span><span class="a" style="width:11.16px">3_</span><span class="k" style="width:44.64px">创建完毕</span></div><div class="abs" style="left:298.00px;top:466.20px;width:290.80px;height:38.10px;background:#fff"></div><div class="hd" style="left:298.00px;top:466.20px;width:290.80px;height:19.30px"></div><div class="hl" style="left:297.50px;top:465.70px;width:291.80px"></div><div class="hl" style="left:297.50px;top:485.00px;width:291.80px"></div><div class="hl" style="left:297.50px;top:503.80px;width:291.80px"></div><div class="vl" style="left:297.50px;top:465.70px;height:39.10px"></div><div class="vl" style="left:588.30px;top:465.70px;height:39.10px"></div><div class="vl" style="left:380.80px;top:465.70px;height:20.30px"></div><div class="vl" style="left:448.30px;top:465.70px;height:20.30px"></div><div class="vl" style="left:482.00px;top:465.70px;height:20.30px"></div><div class="vl" style="left:515.30px;top:465.70px;height:20.30px"></div><div class="vl" style="left:380.80px;top:485.00px;height:19.80px"></div><div class="vl" style="left:448.30px;top:485.00px;height:19.80px"></div><div class="vl" style="left:482.00px;top:485.00px;height:19.80px"></div><div class="vl" style="left:515.30px;top:485.00px;height:19.80px"></div><div class="ct" style="left:302.50px;top:468.85px;color:#000000"><span class="k" style="width:44.64px">子程序名</span></div><div class="ct" style="left:385.50px;top:468.85px;color:#000000"><span class="k" style="width:55.80px">返回值类型</span></div><div class="ct" style="left:452.80px;top:468.85px;color:#000000"><span class="k" style="width:22.32px">公开</span></div><div class="ct" style="left:486.50px;top:468.85px;color:#000000"><span class="k" style="width:22.32px">易包</span></div><div class="ct" style="left:519.80px;top:468.85px;color:#000000"><span class="k" style="width:11.16px">备</span><span class="a" style="width:5.58px">&nbsp;</span><span class="k" style="width:11.16px">注</span></div><div class="ln" style="top:488.6px">25</div><svg style="left:277px;top:491.3px" width="9" height="9" viewBox="0 0 9 9"><path d="M4.5 0.4v8.200M0.4 4.500h8.200" stroke="#1a1a8c" stroke-width="1" fill="none"/></svg><div class="ct" style="left:302.50px;top:487.90px;color:#000080"><span class="a" style="width:5.58px">_</span><span class="k" style="width:22.32px">按钮</span><span class="a" style="width:11.16px">1_</span><span class="k" style="width:33.48px">被单击</span></div><div class="abs" style="left:298.00px;top:512.50px;width:324.00px;height:38.10px;background:#fff"></div><div class="hd" style="left:298.00px;top:512.50px;width:324.00px;height:19.50px"></div><div class="hl" style="left:297.50px;top:512.00px;width:325.00px"></div><div class="hl" style="left:297.50px;top:531.50px;width:325.00px"></div><div class="hl" style="left:297.50px;top:550.10px;width:325.00px"></div><div class="vl" style="left:297.50px;top:512.00px;height:39.10px"></div><div class="vl" style="left:621.50px;top:512.00px;height:39.10px"></div><div class="vl" style="left:414.80px;top:512.00px;height:20.50px"></div><div class="vl" style="left:481.50px;top:512.00px;height:20.50px"></div><div class="vl" style="left:515.30px;top:512.00px;height:20.50px"></div><div class="vl" style="left:548.80px;top:512.00px;height:20.50px"></div><div class="vl" style="left:414.80px;top:531.50px;height:19.60px"></div><div class="vl" style="left:481.50px;top:531.50px;height:19.60px"></div><div class="vl" style="left:515.30px;top:531.50px;height:19.60px"></div><div class="vl" style="left:548.80px;top:531.50px;height:19.60px"></div><div class="ct" style="left:302.50px;top:515.25px;color:#000000"><span class="k" style="width:44.64px">子程序名</span></div><div class="ct" style="left:419.50px;top:515.25px;color:#000000"><span class="k" style="width:55.80px">返回值类型</span></div><div class="ct" style="left:486.00px;top:515.25px;color:#000000"><span class="k" style="width:22.32px">公开</span></div><div class="ct" style="left:519.80px;top:515.25px;color:#000000"><span class="k" style="width:22.32px">易包</span></div><div class="ct" style="left:553.30px;top:515.25px;color:#000000"><span class="k" style="width:11.16px">备</span><span class="a" style="width:5.58px">&nbsp;</span><span class="k" style="width:11.16px">注</span></div><div class="ln" style="top:535.0px">32</div><svg style="left:277px;top:537.7px" width="9" height="9" viewBox="0 0 9 9"><path d="M4.5 0.4v8.200M0.4 4.500h8.200" stroke="#1a1a8c" stroke-width="1" fill="none"/></svg><div class="ct" style="left:302.50px;top:534.30px;color:#000080"><span class="a" style="width:5.58px">_</span><span class="k" style="width:44.64px">拖放对象</span><span class="a" style="width:11.16px">1_</span><span class="k" style="width:44.64px">得到文件</span></div><div class="abs" style="left:298.00px;top:559.20px;width:262.30px;height:96.60px;background:#fff"></div><div class="hd" style="left:298.00px;top:559.20px;width:262.30px;height:18.80px"></div><div class="hd" style="left:298.00px;top:598.00px;width:262.30px;height:19.50px"></div><div class="hl" style="left:297.50px;top:558.70px;width:263.30px"></div><div class="hl" style="left:297.50px;top:577.50px;width:263.30px"></div><div class="hl" style="left:297.50px;top:597.50px;width:263.30px"></div><div class="hl" style="left:297.50px;top:617.00px;width:263.30px"></div><div class="hl" style="left:297.50px;top:636.50px;width:263.30px"></div><div class="hl" style="left:297.50px;top:655.30px;width:263.30px"></div><div class="vl" style="left:297.50px;top:558.70px;height:97.60px"></div><div class="vl" style="left:559.80px;top:558.70px;height:97.60px"></div><div class="vl" style="left:353.30px;top:558.70px;height:19.80px"></div><div class="vl" style="left:420.30px;top:558.70px;height:19.80px"></div><div class="vl" style="left:454.00px;top:558.70px;height:19.80px"></div><div class="vl" style="left:487.00px;top:558.70px;height:19.80px"></div><div class="vl" style="left:353.30px;top:577.50px;height:21.00px"></div><div class="vl" style="left:420.30px;top:577.50px;height:21.00px"></div><div class="vl" style="left:454.00px;top:577.50px;height:21.00px"></div><div class="vl" style="left:487.00px;top:577.50px;height:21.00px"></div><div class="vl" style="left:353.30px;top:597.50px;height:20.50px"></div><div class="vl" style="left:420.30px;top:597.50px;height:20.50px"></div><div class="vl" style="left:454.00px;top:597.50px;height:20.50px"></div><div class="vl" style="left:487.00px;top:597.50px;height:20.50px"></div><div class="vl" style="left:521.00px;top:597.50px;height:20.50px"></div><div class="vl" style="left:353.30px;top:617.00px;height:20.50px"></div><div class="vl" style="left:420.30px;top:617.00px;height:20.50px"></div><div class="vl" style="left:454.00px;top:617.00px;height:20.50px"></div><div class="vl" style="left:487.00px;top:617.00px;height:20.50px"></div><div class="vl" style="left:521.00px;top:617.00px;height:20.50px"></div><div class="vl" style="left:353.30px;top:636.50px;height:19.80px"></div><div class="vl" style="left:420.30px;top:636.50px;height:19.80px"></div><div class="vl" style="left:454.00px;top:636.50px;height:19.80px"></div><div class="vl" style="left:487.00px;top:636.50px;height:19.80px"></div><div class="vl" style="left:521.00px;top:636.50px;height:19.80px"></div><div class="ct" style="left:302.50px;top:561.60px;color:#000000"><span class="k" style="width:44.64px">子程序名</span></div><div class="ct" style="left:357.80px;top:561.60px;color:#000000"><span class="k" style="width:55.80px">返回值类型</span></div><div class="ct" style="left:424.80px;top:561.60px;color:#000000"><span class="k" style="width:22.32px">公开</span></div><div class="ct" style="left:458.50px;top:561.60px;color:#000000"><span class="k" style="width:22.32px">易包</span></div><div class="ct" style="left:491.50px;top:561.60px;color:#000000"><span class="k" style="width:11.16px">备</span><span class="a" style="width:5.58px">&nbsp;</span><span class="k" style="width:11.16px">注</span></div><div class="ln" style="top:582.0px">37</div><div class="ct" style="left:302.50px;top:581.00px;color:#0000ff"><span class="k" style="width:44.64px">写入验证</span></div><div class="ct" style="left:302.50px;top:600.75px;color:#000000"><span class="k" style="width:33.48px">参数名</span></div><div class="ct" style="left:357.80px;top:600.75px;color:#000000"><span class="k" style="width:11.16px">类</span><span class="a" style="width:5.58px">&nbsp;</span><span class="k" style="width:11.16px">型</span></div><div class="ct" style="left:424.80px;top:600.75px;color:#000000"><span class="k" style="width:22.32px">参考</span></div><div class="ct" style="left:458.50px;top:600.75px;color:#000000"><span class="k" style="width:22.32px">可空</span></div><div class="ct" style="left:491.50px;top:600.75px;color:#000000"><span class="k" style="width:22.32px">数组</span></div><div class="ct" style="left:525.50px;top:600.75px;color:#000000"><span class="k" style="width:11.16px">备</span><span class="a" style="width:5.58px">&nbsp;</span><span class="k" style="width:11.16px">注</span></div><div class="ln" style="top:621.2px">38</div><div class="ct" style="left:302.50px;top:620.25px;color:#000000"><span class="k" style="width:33.48px">源文件</span></div><div class="ct" style="left:357.80px;top:620.25px;color:#0000ff"><span class="k" style="width:33.48px">字节集</span></div><div class="ln" style="top:640.4px">39</div><div class="ct" style="left:302.50px;top:639.40px;color:#000000"><span class="k" style="width:44.64px">验证数据</span></div><div class="ct" style="left:357.80px;top:639.40px;color:#0000ff"><span class="k" style="width:33.48px">字节集</span></div><div class="ln" style="top:264.7px">14</div><div class="cl" style="top:263.60px"><span style="color:#9a0f0f"><span class="k" style="width:44.64px">置入代码</span></span><span style="color:#000080"><span class="a" style="width:22.32px">&nbsp;({&nbsp;</span></span><span style="color:#a52a2a"><span class="a" style="width:16.74px">235</span></span><span style="color:#000080"><span class="a" style="width:11.16px">,&nbsp;</span></span><span style="color:#a52a2a"><span class="a" style="width:11.16px">16</span></span><span style="color:#000080"><span class="a" style="width:11.16px">,&nbsp;</span></span><span style="color:#a52a2a"><span class="a" style="width:11.16px">86</span></span><span style="color:#000080"><span class="a" style="width:11.16px">,&nbsp;</span></span><span style="color:#a52a2a"><span class="a" style="width:11.16px">77</span></span><span style="color:#000080"><span class="a" style="width:11.16px">,&nbsp;</span></span><span style="color:#a52a2a"><span class="a" style="width:11.16px">80</span></span><span style="color:#000080"><span class="a" style="width:11.16px">,&nbsp;</span></span><span style="color:#a52a2a"><span class="a" style="width:16.74px">114</span></span><span style="color:#000080"><span class="a" style="width:11.16px">,&nbsp;</span></span><span style="color:#a52a2a"><span class="a" style="width:16.74px">111</span></span><span style="color:#000080"><span class="a" style="width:11.16px">,&nbsp;</span></span><span style="color:#a52a2a"><span class="a" style="width:16.74px">116</span></span><span style="color:#000080"><span class="a" style="width:11.16px">,&nbsp;</span></span><span style="color:#a52a2a"><span class="a" style="width:16.74px">101</span></span><span style="color:#000080"><span class="a" style="width:11.16px">,&nbsp;</span></span><span style="color:#a52a2a"><span class="a" style="width:11.16px">99</span></span><span style="color:#000080"><span class="a" style="width:11.16px">,&nbsp;</span></span><span style="color:#a52a2a"><span class="a" style="width:16.74px">116</span></span><span style="color:#000080"><span class="a" style="width:11.16px">,&nbsp;</span></span><span style="color:#a52a2a"><span class="a" style="width:11.16px">32</span></span><span style="color:#000080"><span class="a" style="width:11.16px">,&nbsp;</span></span><span style="color:#a52a2a"><span class="a" style="width:11.16px">98</span></span><span style="color:#000080"><span class="a" style="width:11.16px">,&nbsp;</span></span><span style="color:#a52a2a"><span class="a" style="width:16.74px">101</span></span><span style="color:#000080"><span class="a" style="width:11.16px">,&nbsp;</span></span><span style="color:#a52a2a"><span class="a" style="width:16.74px">103</span></span><span style="color:#000080"><span class="a" style="width:11.16px">,&nbsp;</span></span><span style="color:#a52a2a"><span class="a" style="width:16.74px">105</span></span><span style="color:#000080"><span class="a" style="width:11.16px">,&nbsp;</span></span><span style="color:#a52a2a"><span class="a" style="width:16.74px">110</span></span><span style="color:#000080"><span class="a" style="width:11.16px">,&nbsp;</span></span><span style="color:#a52a2a"><span class="a" style="width:5.58px">0</span></span><span style="color:#000080"><span class="a" style="width:16.74px">&nbsp;})</span></span><span style="color:#008000"><span class="a" style="width:11.16px">&nbsp;&nbsp;</span></span><span class="a" style="width:5.58px;color:#008000">’</span><span style="color:#008000"><span class="a" style="width:22.32px">&nbsp;VMP</span><span class="k" style="width:66.96px">过程加密开始</span></span></div><div class="abs" style="left:328px;top:278px;width:0;height:8.5px;border-left:1px dotted #b4b4b4"></div><div class="abs" style="left:329px;top:286.3px;width:7px;height:0;border-top:1px dotted #b4b4b4"></div><div class="cl" style="top:279.40px;left:339.60px"><span style="color:#000000"><span class="k" style="width:55.80px">※代码数据</span><span class="a" style="width:16.74px">:&nbsp;&nbsp;</span></span><span style="color:#000080"><span class="a" style="width:11.16px">{&nbsp;</span></span><span style="color:#a52a2a"><span class="a" style="width:16.74px">235</span></span><span style="color:#000080"><span class="a" style="width:11.16px">,&nbsp;</span></span><span style="color:#a52a2a"><span class="a" style="width:11.16px">16</span></span><span style="color:#000080"><span class="a" style="width:11.16px">,&nbsp;</span></span><span style="color:#a52a2a"><span class="a" style="width:11.16px">86</span></span><span style="color:#000080"><span class="a" style="width:11.16px">,&nbsp;</span></span><span style="color:#a52a2a"><span class="a" style="width:11.16px">77</span></span><span style="color:#000080"><span class="a" style="width:11.16px">,&nbsp;</span></span><span style="color:#a52a2a"><span class="a" style="width:11.16px">80</span></span><span style="color:#000080"><span class="a" style="width:11.16px">,&nbsp;</span></span><span style="color:#a52a2a"><span class="a" style="width:16.74px">114</span></span><span style="color:#000080"><span class="a" style="width:11.16px">,&nbsp;</span></span><span style="color:#a52a2a"><span class="a" style="width:16.74px">111</span></span><span style="color:#000080"><span class="a" style="width:11.16px">,&nbsp;</span></span><span style="color:#a52a2a"><span class="a" style="width:16.74px">116</span></span><span style="color:#000080"><span class="a" style="width:11.16px">,&nbsp;</span></span><span style="color:#a52a2a"><span class="a" style="width:16.74px">101</span></span><span style="color:#000080"><span class="a" style="width:11.16px">,&nbsp;</span></span><span style="color:#a52a2a"><span class="a" style="width:11.16px">99</span></span><span style="color:#000080"><span class="a" style="width:11.16px">,&nbsp;</span></span><span style="color:#a52a2a"><span class="a" style="width:16.74px">116</span></span><span style="color:#000080"><span class="a" style="width:11.16px">,&nbsp;</span></span><span style="color:#a52a2a"><span class="a" style="width:11.16px">32</span></span><span style="color:#000080"><span class="a" style="width:11.16px">,&nbsp;</span></span><span style="color:#a52a2a"><span class="a" style="width:11.16px">98</span></span><span style="color:#000080"><span class="a" style="width:11.16px">,&nbsp;</span></span><span style="color:#a52a2a"><span class="a" style="width:16.74px">101</span></span><span style="color:#000080"><span class="a" style="width:11.16px">,&nbsp;</span></span><span style="color:#a52a2a"><span class="a" style="width:16.74px">103</span></span><span style="color:#000080"><span class="a" style="width:11.16px">,&nbsp;</span></span><span style="color:#a52a2a"><span class="a" style="width:16.74px">105</span></span><span style="color:#000080"><span class="a" style="width:11.16px">,&nbsp;</span></span><span style="color:#a52a2a"><span class="a" style="width:16.74px">110</span></span><span style="color:#000080"><span class="a" style="width:11.16px">,&nbsp;</span></span><span style="color:#a52a2a"><span class="a" style="width:5.58px">0</span></span><span style="color:#000080"><span class="a" style="width:11.16px">&nbsp;}</span></span></div><div class="ln" style="top:294.8px">15</div><div class="cl" style="top:293.70px"><span style="color:#9a0f0f"><span class="k" style="width:22.32px">皮肤</span><span class="a" style="width:5.58px">_</span><span class="k" style="width:22.32px">加载</span></span><span style="color:#000080"><span class="a" style="width:16.74px">&nbsp;(#</span><span class="k" style="width:22.32px">皮肤</span><span class="a" style="width:5.58px">_</span><span class="k" style="width:22.32px">彩虹</span><span class="a" style="width:5.58px">)</span></span></div><div class="ln" style="top:311.5px">16</div><div class="cl" style="top:310.40px"><span style="color:#000000"><span class="k" style="width:44.64px">拖放对象</span><span class="a" style="width:11.16px">1.</span></span><span style="color:#9a0f0f"><span class="k" style="width:66.96px">注册拖放控件</span></span><span style="color:#000080"><span class="a" style="width:11.16px">&nbsp;(</span></span><span style="color:#9a0f0f"><span class="k" style="width:55.80px">取窗口句柄</span></span><span style="color:#000080"><span class="a" style="width:22.32px">&nbsp;())</span></span></div><div class="ln" style="top:327.8px">17</div><div class="cl" style="top:326.70px"><span style="color:#000000"><span class="k" style="width:33.48px">编辑框</span><span class="a" style="width:5.58px">_</span><span class="k" style="width:44.64px">后台网站</span><span class="a" style="width:5.58px">.</span><span class="k" style="width:22.32px">内容</span></span><span style="color:#0000ff"><span class="a" style="width:5.58px">&nbsp;</span><span class="k" style="width:11.16px">＝</span><span class="a" style="width:5.58px">&nbsp;</span></span><span style="color:#9a0f0f"><span class="k" style="width:44.64px">读配置项</span></span><span style="color:#000080"><span class="a" style="width:11.16px">&nbsp;(</span></span><span style="color:#9a0f0f"><span class="k" style="width:55.80px">取运行目录</span></span><span style="color:#000080"><span class="a" style="width:22.32px">&nbsp;()&nbsp;</span></span><span style="color:#000080"><span class="k" style="width:11.16px">＋</span><span class="a" style="width:5.58px">&nbsp;</span></span><span style="color:#008080"><span class="k qr" style="width:11.16px">“</span><span class="a" style="width:78.12px">\zcmconfig.ini</span><span class="k ql" style="width:11.16px">”</span></span><span style="color:#000080"><span class="a" style="width:11.16px">,&nbsp;</span></span><span style="color:#008080"><span class="k qr" style="width:11.16px">“</span><span class="k" style="width:89.28px">一键加密程序配置</span><span class="k ql" style="width:11.16px">”</span></span><span style="color:#000080"><span class="a" style="width:11.16px">,&nbsp;</span></span><span style="color:#008080"><span class="k qr" style="width:11.16px">“</span><span class="k" style="width:55.80px">服务器地址</span><span class="k ql" style="width:11.16px">”</span></span><span style="color:#000080"><span class="a" style="width:16.74px">,&nbsp;)</span></span></div><div class="ln" style="top:344.5px">18</div><div class="cl" style="top:343.37px"><span style="color:#000000"><span class="k" style="width:33.48px">编辑框</span><span class="a" style="width:5.58px">_</span><span class="k" style="width:22.32px">程序</span><span class="a" style="width:22.32px">key.</span><span class="k" style="width:22.32px">内容</span></span><span style="color:#0000ff"><span class="a" style="width:5.58px">&nbsp;</span><span class="k" style="width:11.16px">＝</span><span class="a" style="width:5.58px">&nbsp;</span></span><span style="color:#9a0f0f"><span class="k" style="width:44.64px">读配置项</span></span><span style="color:#000080"><span class="a" style="width:11.16px">&nbsp;(</span></span><span style="color:#9a0f0f"><span class="k" style="width:55.80px">取运行目录</span></span><span style="color:#000080"><span class="a" style="width:22.32px">&nbsp;()&nbsp;</span></span><span style="color:#000080"><span class="k" style="width:11.16px">＋</span><span class="a" style="width:5.58px">&nbsp;</span></span><span style="color:#008080"><span class="k qr" style="width:11.16px">“</span><span class="a" style="width:78.12px">\zcmconfig.ini</span><span class="k ql" style="width:11.16px">”</span></span><span style="color:#000080"><span class="a" style="width:11.16px">,&nbsp;</span></span><span style="color:#008080"><span class="k qr" style="width:11.16px">“</span><span class="k" style="width:89.28px">一键加密程序配置</span><span class="k ql" style="width:11.16px">”</span></span><span style="color:#000080"><span class="a" style="width:11.16px">,&nbsp;</span></span><span style="color:#008080"><span class="k qr" style="width:11.16px">“</span><span class="k" style="width:22.32px">程序</span><span class="a" style="width:16.74px">KEY</span><span class="k ql" style="width:11.16px">”</span></span><span style="color:#000080"><span class="a" style="width:16.74px">,&nbsp;)</span></span></div><div class="ln" style="top:361.1px">19</div><div class="cl" style="top:360.04px"><span style="color:#000000"><span class="k" style="width:33.48px">编辑框</span><span class="a" style="width:5.58px">_</span><span class="k" style="width:44.64px">程序编号</span><span class="a" style="width:5.58px">.</span><span class="k" style="width:22.32px">内容</span></span><span style="color:#0000ff"><span class="a" style="width:5.58px">&nbsp;</span><span class="k" style="width:11.16px">＝</span><span class="a" style="width:5.58px">&nbsp;</span></span><span style="color:#9a0f0f"><span class="k" style="width:44.64px">读配置项</span></span><span style="color:#000080"><span class="a" style="width:11.16px">&nbsp;(</span></span><span style="color:#9a0f0f"><span class="k" style="width:55.80px">取运行目录</span></span><span style="color:#000080"><span class="a" style="width:22.32px">&nbsp;()&nbsp;</span></span><span style="color:#000080"><span class="k" style="width:11.16px">＋</span><span class="a" style="width:5.58px">&nbsp;</span></span><span style="color:#008080"><span class="k qr" style="width:11.16px">“</span><span class="a" style="width:78.12px">\zcmconfig.ini</span><span class="k ql" style="width:11.16px">”</span></span><span style="color:#000080"><span class="a" style="width:11.16px">,&nbsp;</span></span><span style="color:#008080"><span class="k qr" style="width:11.16px">“</span><span class="k" style="width:89.28px">一键加密程序配置</span><span class="k ql" style="width:11.16px">”</span></span><span style="color:#000080"><span class="a" style="width:11.16px">,&nbsp;</span></span><span style="color:#008080"><span class="k qr" style="width:11.16px">“</span><span class="k" style="width:44.64px">程序编号</span><span class="k ql" style="width:11.16px">”</span></span><span style="color:#000080"><span class="a" style="width:16.74px">,&nbsp;)</span></span></div><div class="ln" style="top:377.8px">20</div><div class="cl" style="top:376.71px"><span style="color:#000000"><span class="k" style="width:33.48px">编辑框</span><span class="a" style="width:5.58px">_</span><span class="k" style="width:55.80px">程序版本号</span><span class="a" style="width:5.58px">.</span><span class="k" style="width:22.32px">内容</span></span><span style="color:#0000ff"><span class="a" style="width:5.58px">&nbsp;</span><span class="k" style="width:11.16px">＝</span><span class="a" style="width:5.58px">&nbsp;</span></span><span style="color:#9a0f0f"><span class="k" style="width:44.64px">读配置项</span></span><span style="color:#000080"><span class="a" style="width:11.16px">&nbsp;(</span></span><span style="color:#9a0f0f"><span class="k" style="width:55.80px">取运行目录</span></span><span style="color:#000080"><span class="a" style="width:22.32px">&nbsp;()&nbsp;</span></span><span style="color:#000080"><span class="k" style="width:11.16px">＋</span><span class="a" style="width:5.58px">&nbsp;</span></span><span style="color:#008080"><span class="k qr" style="width:11.16px">“</span><span class="a" style="width:78.12px">\zcmconfig.ini</span><span class="k ql" style="width:11.16px">”</span></span><span style="color:#000080"><span class="a" style="width:11.16px">,&nbsp;</span></span><span style="color:#008080"><span class="k qr" style="width:11.16px">“</span><span class="k" style="width:89.28px">一键加密程序配置</span><span class="k ql" style="width:11.16px">”</span></span><span style="color:#000080"><span class="a" style="width:11.16px">,&nbsp;</span></span><span style="color:#008080"><span class="k qr" style="width:11.16px">“</span><span class="k" style="width:44.64px">程序版本</span><span class="k ql" style="width:11.16px">”</span></span><span style="color:#000080"><span class="a" style="width:16.74px">,&nbsp;)</span></span></div><div class="ln" style="top:394.5px">21</div><div class="cl" style="top:393.38px"><span style="color:#000000"><span class="k" style="width:33.48px">编辑框</span><span class="a" style="width:5.58px">_</span><span class="k" style="width:44.64px">软件名字</span><span class="a" style="width:5.58px">.</span><span class="k" style="width:22.32px">内容</span></span><span style="color:#0000ff"><span class="a" style="width:5.58px">&nbsp;</span><span class="k" style="width:11.16px">＝</span><span class="a" style="width:5.58px">&nbsp;</span></span><span style="color:#9a0f0f"><span class="k" style="width:44.64px">读配置项</span></span><span style="color:#000080"><span class="a" style="width:11.16px">&nbsp;(</span></span><span style="color:#9a0f0f"><span class="k" style="width:55.80px">取运行目录</span></span><span style="color:#000080"><span class="a" style="width:22.32px">&nbsp;()&nbsp;</span></span><span style="color:#000080"><span class="k" style="width:11.16px">＋</span><span class="a" style="width:5.58px">&nbsp;</span></span><span style="color:#008080"><span class="k qr" style="width:11.16px">“</span><span class="a" style="width:78.12px">\zcmconfig.ini</span><span class="k ql" style="width:11.16px">”</span></span><span style="color:#000080"><span class="a" style="width:11.16px">,&nbsp;</span></span><span style="color:#008080"><span class="k qr" style="width:11.16px">“</span><span class="k" style="width:89.28px">一键加密程序配置</span><span class="k ql" style="width:11.16px">”</span></span><span style="color:#000080"><span class="a" style="width:11.16px">,&nbsp;</span></span><span style="color:#008080"><span class="k qr" style="width:11.16px">“</span><span class="k" style="width:44.64px">程序标题</span><span class="k ql" style="width:11.16px">”</span></span><span style="color:#000080"><span class="a" style="width:16.74px">,&nbsp;)</span></span></div><div class="ln" style="top:411.2px">22</div><div class="cl" style="top:410.05px"><span style="color:#000000"><span class="k" style="width:33.48px">编辑框</span><span class="a" style="width:5.58px">_</span><span class="k" style="width:44.64px">购卡地址</span><span class="a" style="width:5.58px">.</span><span class="k" style="width:22.32px">内容</span></span><span style="color:#0000ff"><span class="a" style="width:5.58px">&nbsp;</span><span class="k" style="width:11.16px">＝</span><span class="a" style="width:5.58px">&nbsp;</span></span><span style="color:#9a0f0f"><span class="k" style="width:44.64px">读配置项</span></span><span style="color:#000080"><span class="a" style="width:11.16px">&nbsp;(</span></span><span style="color:#9a0f0f"><span class="k" style="width:55.80px">取运行目录</span></span><span style="color:#000080"><span class="a" style="width:22.32px">&nbsp;()&nbsp;</span></span><span style="color:#000080"><span class="k" style="width:11.16px">＋</span><span class="a" style="width:5.58px">&nbsp;</span></span><span style="color:#008080"><span class="k qr" style="width:11.16px">“</span><span class="a" style="width:78.12px">\zcmconfig.ini</span><span class="k ql" style="width:11.16px">”</span></span><span style="color:#000080"><span class="a" style="width:11.16px">,&nbsp;</span></span><span style="color:#008080"><span class="k qr" style="width:11.16px">“</span><span class="k" style="width:89.28px">一键加密程序配置</span><span class="k ql" style="width:11.16px">”</span></span><span style="color:#000080"><span class="a" style="width:11.16px">,&nbsp;</span></span><span style="color:#008080"><span class="k qr" style="width:11.16px">“</span><span class="k" style="width:44.64px">购卡链接</span><span class="k ql" style="width:11.16px">”</span></span><span style="color:#000080"><span class="a" style="width:16.74px">,&nbsp;)</span></span></div><div class="ln" style="top:427.8px">23</div><div class="cl" style="top:426.72px"><span style="color:#000000"><span class="k" style="width:33.48px">组合框</span><span class="a" style="width:5.58px">_</span><span class="k" style="width:44.64px">皮肤设置</span><span class="a" style="width:5.58px">.</span><span class="k" style="width:55.80px">现行选中项</span></span><span style="color:#0000ff"><span class="a" style="width:5.58px">&nbsp;</span><span class="k" style="width:11.16px">＝</span><span class="a" style="width:5.58px">&nbsp;</span></span><span style="color:#9a0f0f"><span class="k" style="width:33.48px">到整数</span></span><span style="color:#000080"><span class="a" style="width:11.16px">&nbsp;(</span></span><span style="color:#9a0f0f"><span class="k" style="width:44.64px">读配置项</span></span><span style="color:#000080"><span class="a" style="width:11.16px">&nbsp;(</span></span><span style="color:#9a0f0f"><span class="k" style="width:55.80px">取运行目录</span></span><span style="color:#000080"><span class="a" style="width:22.32px">&nbsp;()&nbsp;</span></span><span style="color:#000080"><span class="k" style="width:11.16px">＋</span><span class="a" style="width:5.58px">&nbsp;</span></span><span style="color:#008080"><span class="k qr" style="width:11.16px">“</span><span class="a" style="width:78.12px">\zcmconfig.ini</span><span class="k ql" style="width:11.16px">”</span></span><span style="color:#000080"><span class="a" style="width:11.16px">,&nbsp;</span></span><span style="color:#008080"><span class="k qr" style="width:11.16px">“</span><span class="k" style="width:89.28px">一键加密程序配置</span><span class="k ql" style="width:11.16px">”</span></span><span style="color:#000080"><span class="a" style="width:11.16px">,&nbsp;</span></span><span style="color:#008080"><span class="k qr" style="width:11.16px">“</span><span class="k" style="width:44.64px">程序皮肤</span><span class="k ql" style="width:11.16px">”</span></span><span style="color:#000080"><span class="a" style="width:22.32px">,&nbsp;))</span></span></div><div class="ln" style="top:444.5px">24</div><div class="cl" style="top:443.39px"><span style="color:#9a0f0f"><span class="k" style="width:44.64px">置入代码</span></span><span style="color:#000080"><span class="a" style="width:22.32px">&nbsp;({&nbsp;</span></span><span style="color:#a52a2a"><span class="a" style="width:16.74px">235</span></span><span style="color:#000080"><span class="a" style="width:11.16px">,&nbsp;</span></span><span style="color:#a52a2a"><span class="a" style="width:11.16px">14</span></span><span style="color:#000080"><span class="a" style="width:11.16px">,&nbsp;</span></span><span style="color:#a52a2a"><span class="a" style="width:11.16px">86</span></span><span style="color:#000080"><span class="a" style="width:11.16px">,&nbsp;</span></span><span style="color:#a52a2a"><span class="a" style="width:11.16px">77</span></span><span style="color:#000080"><span class="a" style="width:11.16px">,&nbsp;</span></span><span style="color:#a52a2a"><span class="a" style="width:11.16px">80</span></span><span style="color:#000080"><span class="a" style="width:11.16px">,&nbsp;</span></span><span style="color:#a52a2a"><span class="a" style="width:16.74px">114</span></span><span style="color:#000080"><span class="a" style="width:11.16px">,&nbsp;</span></span><span style="color:#a52a2a"><span class="a" style="width:16.74px">111</span></span><span style="color:#000080"><span class="a" style="width:11.16px">,&nbsp;</span></span><span style="color:#a52a2a"><span class="a" style="width:16.74px">116</span></span><span style="color:#000080"><span class="a" style="width:11.16px">,&nbsp;</span></span><span style="color:#a52a2a"><span class="a" style="width:16.74px">101</span></span><span style="color:#000080"><span class="a" style="width:11.16px">,&nbsp;</span></span><span style="color:#a52a2a"><span class="a" style="width:11.16px">99</span></span><span style="color:#000080"><span class="a" style="width:11.16px">,&nbsp;</span></span><span style="color:#a52a2a"><span class="a" style="width:16.74px">116</span></span><span style="color:#000080"><span class="a" style="width:11.16px">,&nbsp;</span></span><span style="color:#a52a2a"><span class="a" style="width:11.16px">32</span></span><span style="color:#000080"><span class="a" style="width:11.16px">,&nbsp;</span></span><span style="color:#a52a2a"><span class="a" style="width:16.74px">101</span></span><span style="color:#000080"><span class="a" style="width:11.16px">,&nbsp;</span></span><span style="color:#a52a2a"><span class="a" style="width:16.74px">110</span></span><span style="color:#000080"><span class="a" style="width:11.16px">,&nbsp;</span></span><span style="color:#a52a2a"><span class="a" style="width:16.74px">100</span></span><span style="color:#000080"><span class="a" style="width:11.16px">,&nbsp;</span></span><span style="color:#a52a2a"><span class="a" style="width:5.58px">0</span></span><span style="color:#000080"><span class="a" style="width:16.74px">&nbsp;})</span></span><span style="color:#008000"><span class="a" style="width:11.16px">&nbsp;&nbsp;</span></span><span class="a" style="width:5.58px;color:#008000">’</span><span style="color:#008000"><span class="a" style="width:22.32px">&nbsp;VMP</span><span class="k" style="width:66.96px">过程加密结束</span></span></div><div class="ln" style="top:659.8px">40</div><div class="cl" style="top:658.70px"><span style="color:#9a0f0f"><span class="k" style="width:44.64px">置入代码</span></span><span style="color:#000080"><span class="a" style="width:22.32px">&nbsp;({&nbsp;</span></span><span style="color:#a52a2a"><span class="a" style="width:16.74px">235</span></span><span style="color:#000080"><span class="a" style="width:11.16px">,&nbsp;</span></span><span style="color:#a52a2a"><span class="a" style="width:11.16px">16</span></span><span style="color:#000080"><span class="a" style="width:11.16px">,&nbsp;</span></span><span style="color:#a52a2a"><span class="a" style="width:11.16px">86</span></span><span style="color:#000080"><span class="a" style="width:11.16px">,&nbsp;</span></span><span style="color:#a52a2a"><span class="a" style="width:11.16px">77</span></span><span style="color:#000080"><span class="a" style="width:11.16px">,&nbsp;</span></span><span style="color:#a52a2a"><span class="a" style="width:11.16px">80</span></span><span style="color:#000080"><span class="a" style="width:11.16px">,&nbsp;</span></span><span style="color:#a52a2a"><span class="a" style="width:16.74px">114</span></span><span style="color:#000080"><span class="a" style="width:11.16px">,&nbsp;</span></span><span style="color:#a52a2a"><span class="a" style="width:16.74px">111</span></span><span style="color:#000080"><span class="a" style="width:11.16px">,&nbsp;</span></span><span style="color:#a52a2a"><span class="a" style="width:16.74px">116</span></span><span style="color:#000080"><span class="a" style="width:11.16px">,&nbsp;</span></span><span style="color:#a52a2a"><span class="a" style="width:16.74px">101</span></span><span style="color:#000080"><span class="a" style="width:11.16px">,&nbsp;</span></span><span style="color:#a52a2a"><span class="a" style="width:11.16px">99</span></span><span style="color:#000080"><span class="a" style="width:11.16px">,&nbsp;</span></span><span style="color:#a52a2a"><span class="a" style="width:16.74px">116</span></span><span style="color:#000080"><span class="a" style="width:11.16px">,&nbsp;</span></span><span style="color:#a52a2a"><span class="a" style="width:11.16px">32</span></span><span style="color:#000080"><span class="a" style="width:11.16px">,&nbsp;</span></span><span style="color:#a52a2a"><span class="a" style="width:11.16px">98</span></span><span style="color:#000080"><span class="a" style="width:11.16px">,&nbsp;</span></span><span style="color:#a52a2a"><span class="a" style="width:16.74px">101</span></span><span style="color:#000080"><span class="a" style="width:11.16px">,&nbsp;</span></span><span style="color:#a52a2a"><span class="a" style="width:16.74px">103</span></span><span style="color:#000080"><span class="a" style="width:11.16px">,&nbsp;</span></span><span style="color:#a52a2a"><span class="a" style="width:16.74px">105</span></span><span style="color:#000080"><span class="a" style="width:11.16px">,&nbsp;</span></span><span style="color:#a52a2a"><span class="a" style="width:16.74px">110</span></span><span style="color:#000080"><span class="a" style="width:11.16px">,&nbsp;</span></span><span style="color:#a52a2a"><span class="a" style="width:5.58px">0</span></span><span style="color:#000080"><span class="a" style="width:16.74px">&nbsp;})</span></span><span style="color:#008000"><span class="a" style="width:11.16px">&nbsp;&nbsp;</span></span><span class="a" style="width:5.58px;color:#008000">’</span><span style="color:#008000"><span class="a" style="width:22.32px">&nbsp;VMP</span><span class="k" style="width:66.96px">过程加密开始</span></span></div><div class="abs" style="left:300px;top:682.3px;width:16px;height:0;border-top:1px dotted #a8a8a8"></div><div class="ln" style="top:676.1px">41</div><div class="cl" style="top:675.00px;left:319.80px"><span style="color:#0000ff"><span class="k" style="width:22.32px">判断</span></span><span style="color:#000080"><span class="a" style="width:11.16px">&nbsp;(</span></span><span style="color:#000000"><span class="k" style="width:33.48px">源文件</span></span><span style="color:#000000"><span class="a" style="width:5.58px">&nbsp;</span><span class="k" style="width:11.16px">≠</span><span class="a" style="width:5.58px">&nbsp;</span></span><span style="color:#000080"><span class="a" style="width:27.90px">{&nbsp;&nbsp;})</span></span></div><div class="abs" style="left:218px;top:79.3px;width:806px;height:18.2px;background:#2d2d30"></div><div class="t" style="left:224px;top:80px;color:#dcdcdc;font-size:12px;letter-spacing:0.1px">{&nbsp;}</div><div class="t" style="left:240.5px;top:80.3px;color:#e6e6e6"><span class="u" style="width:55.50px">窗口程序集</span><span class="us">_</span><span class="u" style="width:22.20px">窗口</span>3</div><svg style="left:684.5px;top:85px" width="12" height="6.5" viewBox="0 0 12 6.5"><path d="M0 0h12L6 6.5z" fill="#2a9df4"/></svg><div class="abs" style="left:699px;top:79.3px;width:1px;height:18.2px;background:#444447"></div><svg style="left:705.5px;top:81.7px" width="12" height="13" viewBox="0 0 12 13"><path d="M6 0.7L11.2 3.6V9.4L6 12.3L0.8 9.4V3.6z M0.8 3.6L6 6.5L11.2 3.6 M6 6.5V12.3" fill="none" stroke="#b180d7" stroke-width="1.05" stroke-linejoin="round"/></svg><div class="t" style="left:722.5px;top:80.3px;color:#e6e6e6"><span class="us">_</span><span class="u" style="width:22.20px">按钮</span>1<span class="us">_</span><span class="u" style="width:33.30px">被单击</span></div></div></body></html>
